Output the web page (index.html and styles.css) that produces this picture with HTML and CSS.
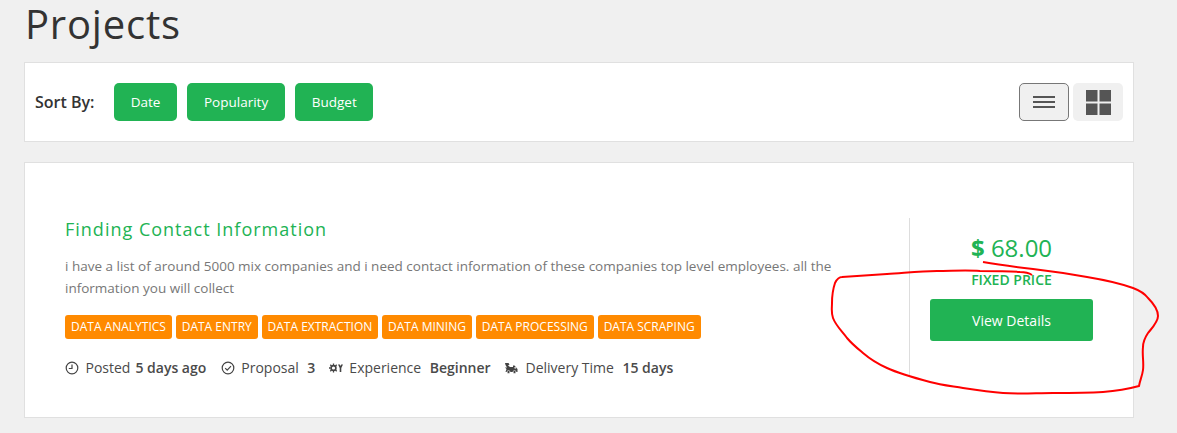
FILE: index.html
```html
<!DOCTYPE html>
<html lang="en">
<head>
    <meta charset="UTF-8">
    <meta name="viewport" content="width=device-width, initial-scale=1.0">
    <title>Projects</title>
    <link rel="stylesheet" href="styles.css">
</head>
<body>
    <div class="container">
        <h1 class="page-title">Projects</h1>

        <div class="sortbar">
            <span class="sort-label">Sort By:</span>
            <button class="sort-btn">Date</button>
            <button class="sort-btn">Popularity</button>
            <button class="sort-btn">Budget</button>
            <div class="views">
                <button class="view-btn active" aria-label="List view">
                    <svg width="22" height="12" viewBox="0 0 22 12"><path d="M0 0h22v2H0zM0 5h22v2H0zM0 10h22v2H0z" fill="#555"/></svg>
                </button>
                <button class="view-btn" aria-label="Grid view">
                    <svg width="25" height="25" viewBox="0 0 25 25"><path d="M0 0h11.500v11.500H0zM13.500 0H25v11.500H13.500zM0 13.500h11.500V25H0zM13.500 13.500H25V25H13.500z" fill="#555"/></svg>
                </button>
            </div>
        </div>

        <div class="card">
            <div class="card-main">
                <h2 class="card-title">Finding Contact Information</h2>
                <p class="card-text">i have a list of around 5000 mix companies and i need contact information of these companies top level employees. all the information you will collect</p>
                <div class="tags">
                    <span class="tag">DATA ANALYTICS</span>
                    <span class="tag">DATA ENTRY</span>
                    <span class="tag">DATA EXTRACTION</span>
                    <span class="tag">DATA MINING</span>
                    <span class="tag">DATA PROCESSING</span>
                    <span class="tag">DATA SCRAPING</span>
                </div>
                <div class="meta">
                    <div class="meta-item item-posted">
                        <svg class="meta-icon" width="14" height="14" viewBox="0 0 14 14"><circle cx="7" cy="7" r="5.800" fill="none" stroke="#444" stroke-width="1.200"/><path d="M7 3.500V7.500H3.800" fill="none" stroke="#444" stroke-width="1.200"/></svg>
                        <span>Posted</span> <b class="posted">5 days ago</b>
                    </div>
                    <div class="meta-item">
                        <svg class="meta-icon" width="14" height="14" viewBox="0 0 14 14"><circle cx="7" cy="7" r="5.800" fill="none" stroke="#444" stroke-width="1.200"/><path d="M4.200 7.200l2 2 3.800-4" fill="none" stroke="#444" stroke-width="1.200"/></svg>
                        <span>Proposal</span> <b>3</b>
                    </div>
                    <div class="meta-item">
                        <svg class="meta-icon" width="14" height="14" viewBox="0 0 14 14"><circle cx="4.500" cy="7" r="2.400" fill="none" stroke="#444" stroke-width="1.600"/><path d="M4.500 2.500v1.600M4.500 9.900v1.600M0 7h1.600M1.300 3.800l1.200 1.200M1.300 10.200L2.500 9M7.700 3.800L6.500 5M7.700 10.200L6.500 9" stroke="#444" stroke-width="1.300"/><path d="M9 3.500h1.800L11.500 5l.7-1.500H14L12.300 7v4h-1.600V7z" fill="#444"/></svg>
                        <span>Experience</span> <b>Beginner</b>
                    </div>
                    <div class="meta-item item-delivery">
                        <svg class="meta-icon" width="14" height="14" viewBox="0 0 14 14"><path d="M1 2h3.500l1 1.500-1.500 1L6 6h3V4.500h1.500L13.500 8v3H1.500L2.500 8 1 6.500h2L1.500 4z" fill="#444"/><path d="M10.500 6h1l.8 1.500h-1.800z" fill="#fff"/><circle cx="4.500" cy="11" r="1.500" fill="#444" stroke="#fff" stroke-width=".6"/><circle cx="10.500" cy="11" r="1.500" fill="#444" stroke="#fff" stroke-width=".6"/></svg>
                        <span>Delivery Time</span> <b>15 days</b>
                    </div>
                </div>
            </div>
            <div class="card-side">
                <div class="price"><b>$</b> 68.00</div>
                <div class="price-type">FIXED PRICE</div>
                <button class="details-btn">View Details</button>
            </div>
        </div>
    </div>

    <!-- red pen scribble drawn over the screenshot -->
    <svg class="scribble" width="1177" height="433" viewBox="0 0 1177 433">
        <path d="M983 262C1000 265 1016 267 1033 269S1070 274 1087 277C1105 280 1122 284 1133 288C1141 291 1145 294 1148 298C1154 304 1158 310 1158 316C1158 322 1152 328 1148 333C1144 339 1143 342 1143 347C1142 355 1144 362 1143 370C1142 377 1140 380 1139 386C1128 389 1116 391 1103 392C1086 393 1070 393 1053 393C1036 393 1020 394 1003 393C989 392 976 390 963 388C951 386 941 385 930 382C915 378 900 374 887 368C878 364 870 359 863 353C857 348 852 344 847 338C842 331 836 326 833 318C831 313 832 308 832 303C832 296 833 289 835 283C837 279 839 277 842 277L887 274C904 273 920 271 937 271C951 271 966 270 980 271C993 271 1007 271 1020 272C1025 272 1029 273 1032 275" fill="none" stroke="#f00" stroke-width="2"/>
    </svg>
</body>
</html>
```

FILE: styles.css
```css
html, body {
    margin: 0;
    height: 100%;
    overflow: hidden;
    background-color: #f0f0f0;
    font-family: "Open Sans", sans-serif;
    color: #4a4a4a;
}
.container {
    width: 1110px;
    margin-left: 24px;
}
.page-title {
    margin: 0;
    height: 62px;
    padding-left: 1px;
    font-size: 40px;
    line-height: 48px;
    font-weight: 400;
    letter-spacing: 0.8px;
    color: #333;
}
.sortbar {
    box-sizing: border-box;
    height: 80px;
    display: flex;
    align-items: center;
    padding: 0 10px;
    background-color: #fff;
    border: 1px solid #e0e0e0;
}
.sort-label {
    width: 79px;
    font-size: 16px;
    font-weight: 600;
    color: #333;
}
.sort-btn {
    height: 38px;
    padding: 0 16.700px;
    margin-right: 10.200px;
    border: 0;
    border-radius: 5px;
    background-color: #21b354;
    color: #fff;
    font-family: inherit;
    font-size: 13.500px;
}
.views {
    margin-left: auto;
    display: flex;
    gap: 4px;
}
.view-btn {
    box-sizing: border-box;
    width: 50px;
    height: 38px;
    padding: 0;
    display: flex;
    align-items: center;
    justify-content: center;
    border: 0;
    border-radius: 5px;
    background-color: #f0f0f0;
}
.view-btn.active {
    border: 1px solid #777;
}
.card {
    box-sizing: border-box;
    height: 256px;
    margin-top: 20px;
    padding: 55px 20px 0 40px;
    display: flex;
    align-items: flex-start;
    background-color: #fff;
    border: 1px solid #e0e0e0;
}
.card-main {
    width: 844px;
    height: 157px;
    border-right: 1px solid #ddd;
}
.card-title {
    margin: -1px 0 0;
    font-size: 18px;
    line-height: 24px;
    font-weight: 400;
    letter-spacing: 1px;
    color: #21b354;
}
.card-text {
    width: 790px;
    margin: 14px 0 0;
    font-size: 13.500px;
    line-height: 22px;
    color: #777;
}
.tags {
    display: flex;
    gap: 3.800px;
    margin-top: 16px;
}
.tag {
    padding: 0 6px;
    height: 24px;
    line-height: 24px;
    border-radius: 3px;
    background-color: #ff8a00;
    color: #fff;
    font-size: 12px;
}
.meta {
    display: flex;
    gap: 13.500px;
    margin-top: 19px;
    font-size: 14px;
    line-height: 20px;
}
.meta-item {
    display: flex;
    align-items: center;
    white-space: pre;
}
.item-posted {
    margin-right: 1px;
}
.meta-icon {
    margin-right: 6.500px;
}
.item-delivery .meta-icon {
    margin-right: 7.500px;
}
.meta b {
    margin-left: 8.500px;
    font-weight: 600;
}
.meta b.posted {
    margin-left: 5px;
}
.card-side {
    flex: 1;
    display: flex;
    flex-direction: column;
    align-items: center;
    padding-top: 13px;
}
.price {
    font-size: 24px;
    line-height: 34px;
    color: #21b354;
}
.price b {
    font-weight: 700;
}
.price-type {
    margin-top: 5px;
    font-size: 14px;
    line-height: 20px;
    font-weight: 600;
    color: #21b354;
}
.details-btn {
    width: 163px;
    height: 42px;
    margin-top: 9px;
    border: 0;
    border-radius: 3px;
    background-color: #21b354;
    color: #fff;
    font-family: inherit;
    font-size: 14px;
}
.scribble {
    position: absolute;
    left: 0;
    top: 0;
    pointer-events: none;
}
```
